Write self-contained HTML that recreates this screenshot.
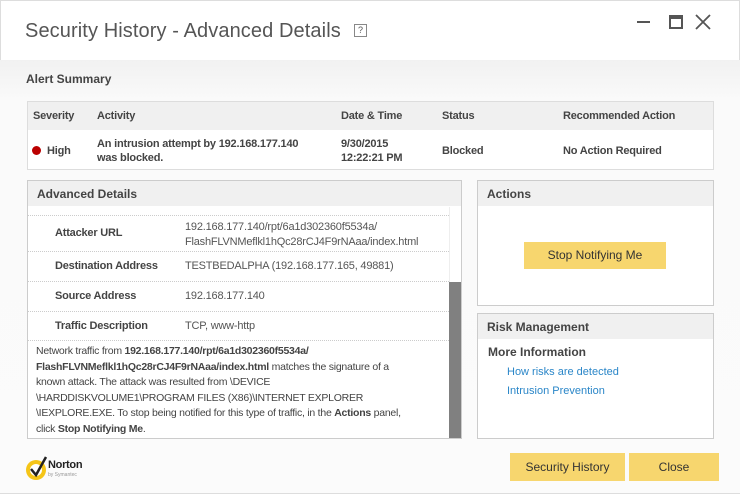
<!DOCTYPE html>
<html><head><style>
*{margin:0;padding:0;box-sizing:border-box}
body{width:740px;height:494px;overflow:hidden;font-family:"Liberation Sans",sans-serif;background:#fff;position:relative;color:#333}
.a{position:absolute}
.b{font-weight:bold}
.lbl{font-size:11px;font-weight:bold;color:#444;letter-spacing:-0.2px}
.val{font-size:11px;color:#555;letter-spacing:-0.2px}
.dot{border-bottom:1px dotted #ccc}
.btn{background:#f7d66e;font-size:12px;color:#333;text-align:center}
</style></head><body>
<div class="a" style="left:0;top:0;width:740px;height:494px;border:1px solid #ddd"></div>
<div class="a" style="left:0;top:60px;width:740px;height:433px;background:linear-gradient(#f1f1f1,#fafafa 40px,#fbfbfb)"></div>
<div class="a" style="left:25px;top:20px;font-size:20px;color:#555;letter-spacing:0.1px">Security History - Advanced Details</div>
<div class="a" style="left:354px;top:24px;width:13px;height:13px;border:1px solid #888;font-size:9px;text-align:center;line-height:11px;color:#555">?</div>
<div class="a" style="left:637px;top:21px;width:13px;height:2px;background:#555"></div>
<div class="a" style="left:669px;top:15px;width:14px;height:14px;border:2px solid #555;border-top-width:4px"></div>
<svg class="a" style="left:695px;top:14px" width="16" height="16"><path d="M1 1L15 15M15 1L1 15" stroke="#555" stroke-width="1.8"/></svg>
<div class="a b" style="left:26px;top:72px;font-size:12px;color:#444">Alert Summary</div>
<div class="a" style="left:27px;top:101px;width:687px;height:69px;border:1px solid #ddd;background:#fff">
 <div style="height:28px;background:#f0f0f0"></div>
</div>
<div class="a lbl" style="left:33px;top:110px">Severity</div>
<div class="a lbl" style="left:97px;top:110px">Activity</div>
<div class="a lbl" style="left:341px;top:110px">Date &amp; Time</div>
<div class="a lbl" style="left:442px;top:110px">Status</div>
<div class="a lbl" style="left:563px;top:110px">Recommended Action</div>
<div class="a" style="left:32px;top:146px;width:9px;height:9px;border-radius:50%;background:#b00"></div>
<div class="a lbl" style="left:47px;top:145px">High</div>
<div class="a lbl" style="left:97px;top:137px;line-height:14px">An intrusion attempt by 192.168.177.140<br>was blocked.</div>
<div class="a lbl" style="left:341px;top:137px;line-height:14px">9/30/2015<br>12:22:21 PM</div>
<div class="a lbl" style="left:442px;top:145px">Blocked</div>
<div class="a lbl" style="left:563px;top:145px">No Action Required</div>

<div class="a" style="left:27px;top:180px;width:435px;height:259px;border:1px solid #ccc;background:#fff">
 <div style="height:25px;background:#f0f0f0;font-size:12px;font-weight:bold;color:#444;padding:6px 0 0 9px">Advanced Details</div>
</div>
<div class="a" style="left:449px;top:207px;width:12px;height:231px;background:#fff;border-left:1px solid #eee"></div>
<div class="a" style="left:449px;top:282px;width:12px;height:156px;background:#808080"></div>
<div class="a dot" style="left:28px;top:215px;width:421px"></div>
<div class="a lbl" style="left:55px;top:227px">Attacker URL</div>
<div class="a val" style="left:185px;top:220px;line-height:15px">192.168.177.140/rpt/6a1d302360f5534a/<br>FlashFLVNMeflkl1hQc28rCJ4F9rNAaa/index.html</div>
<div class="a dot" style="left:28px;top:251px;width:421px"></div>
<div class="a lbl" style="left:55px;top:260px">Destination Address</div>
<div class="a val" style="left:185px;top:260px">TESTBEDALPHA (192.168.177.165, 49881)</div>
<div class="a dot" style="left:28px;top:281px;width:421px"></div>
<div class="a lbl" style="left:55px;top:290px">Source Address</div>
<div class="a val" style="left:185px;top:290px">192.168.177.140</div>
<div class="a dot" style="left:28px;top:311px;width:421px"></div>
<div class="a lbl" style="left:55px;top:320px">Traffic Description</div>
<div class="a val" style="left:185px;top:320px">TCP, www-http</div>
<div class="a dot" style="left:28px;top:340px;width:421px"></div>
<div class="a" style="left:36px;top:344px;width:420px;font-size:10.5px;line-height:15.5px;color:#444;white-space:nowrap;letter-spacing:-0.25px">Network traffic from <b>192.168.177.140/rpt/6a1d302360f5534a/</b><br><b>FlashFLVNMeflkl1hQc28rCJ4F9rNAaa/index.html</b> matches the signature of a<br>known attack. The attack was resulted from \DEVICE<br>\HARDDISKVOLUME1\PROGRAM FILES (X86)\INTERNET EXPLORER<br>\IEXPLORE.EXE. To stop being notified for this type of traffic, in the <b>Actions</b> panel,<br>click <b>Stop Notifying Me</b>.</div>

<div class="a" style="left:477px;top:180px;width:237px;height:126px;border:1px solid #ccc;background:#fff">
 <div style="height:25px;background:#f0f0f0;font-size:12px;font-weight:bold;color:#444;padding:6px 0 0 9px">Actions</div>
</div>
<div class="a btn" style="left:524px;top:242px;width:142px;height:27px;line-height:27px">Stop Notifying Me</div>
<div class="a" style="left:477px;top:313px;width:237px;height:126px;border:1px solid #ccc;background:#fff">
 <div style="height:25px;background:#f0f0f0;font-size:12px;font-weight:bold;color:#444;padding:6px 0 0 9px">Risk Management</div>
</div>
<div class="a b" style="left:488px;top:345px;font-size:12px;color:#444">More Information</div>
<div class="a" style="left:507px;top:366px;font-size:11px;color:#2a86c8">How risks are detected</div>
<div class="a" style="left:507px;top:385px;font-size:11px;color:#2a86c8">Intrusion Prevention</div>

<svg class="a" style="left:25px;top:455px" width="24" height="28"><circle cx="11" cy="15" r="10" fill="#f5c518"/><circle cx="11" cy="15" r="6" fill="#fff"/><path d="M6 14l5 6 10-18" stroke="#222" stroke-width="2.5" fill="none"/></svg>
<div class="a b" style="left:48px;top:459px;font-size:11px;color:#222;letter-spacing:-0.3px">Norton</div>
<div class="a" style="left:48px;top:472px;font-size:5px;color:#999">by Symantec</div>
<div class="a btn" style="left:510px;top:453px;width:115px;height:28px;line-height:28px">Security History</div>
<div class="a btn" style="left:629px;top:453px;width:90px;height:28px;line-height:28px">Close</div>
</body></html>
